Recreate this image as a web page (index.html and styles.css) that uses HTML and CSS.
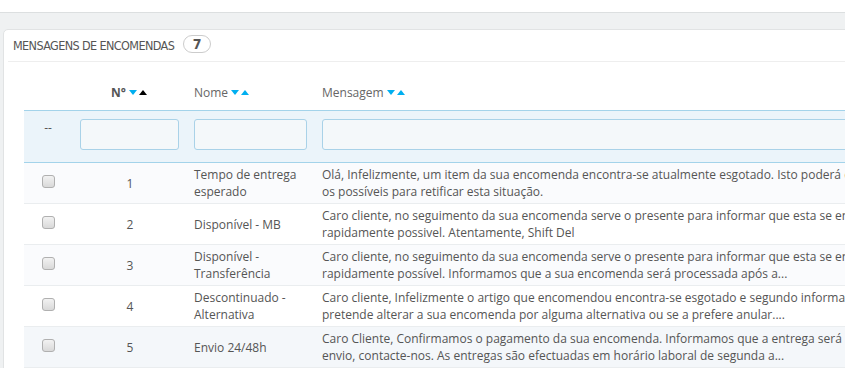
FILE: index.html
```
<!DOCTYPE html>
<html lang="pt">
<head>
    <meta charset="UTF-8">
    <meta name="viewport" content="width=device-width, initial-scale=1.0">
    <title>Mensagens de encomendas</title>
    <link rel="stylesheet" href="styles.css">
</head>
<body>

<div class="topbar"></div>

<div class="content">
    <div class="panel">
        <div class="panelHeading">
            Mensagens de encomendas
            <span class="badge">7</span>
        </div>

        <div class="tableWrap">
            <table class="listTable">
                <colgroup>
                    <col class="colCheck">
                    <col class="colId">
                    <col class="colName">
                    <col class="colMessage">
                </colgroup>
                <thead>
                    <tr class="headRow">
                        <th></th>
                        <th class="center active">N°<span class="sort"><i class="down"></i><i class="up current"></i></span></th>
                        <th>Nome<span class="sort"><i class="down"></i><i class="up"></i></span></th>
                        <th>Mensagem<span class="sort"><i class="down"></i><i class="up"></i></span></th>
                    </tr>
                    <tr class="filterRow">
                        <td class="center">--</td>
                        <td><input type="text" class="filter"></td>
                        <td><input type="text" class="filter"></td>
                        <td><input type="text" class="filter"></td>
                    </tr>
                </thead>
                <tbody>
                    <tr>
                        <td class="center"><input type="checkbox" class="rowCheck"></td>
                        <td class="center">1</td>
                        <td>Tempo de entrega<br>esperado</td>
                        <td class="message">Olá, Infelizmente, um item da sua encomenda encontra-se atualmente esgotado. Isto poderá causar um atraso na entrega. Faremos todos<br>os possíveis para retificar esta situação.</td>
                    </tr>
                    <tr>
                        <td class="center"><input type="checkbox" class="rowCheck"></td>
                        <td class="center">2</td>
                        <td>Disponível - MB</td>
                        <td class="message">Caro cliente, no seguimento da sua encomenda serve o presente para informar que esta se encontra disponível e será enviada o mais<br>rapidamente possivel. Atentamente, Shift Del</td>
                    </tr>
                    <tr>
                        <td class="center"><input type="checkbox" class="rowCheck"></td>
                        <td class="center">3</td>
                        <td>Disponível -<br>Transferência</td>
                        <td class="message">Caro cliente, no seguimento da sua encomenda serve o presente para informar que esta se encontra disponível e será enviada o mais<br>rapidamente possível. Informamos que a sua encomenda será processada após a...</td>
                    </tr>
                    <tr>
                        <td class="center"><input type="checkbox" class="rowCheck"></td>
                        <td class="center">4</td>
                        <td>Descontinuado -<br>Alternativa</td>
                        <td class="message">Caro cliente, Infelizmente o artigo que encomendou encontra-se esgotado e segundo informação do fornecedor foi descontinuado. Indique-nos se<br>pretende alterar a sua encomenda por alguma alternativa ou se a prefere anular....</td>
                    </tr>
                    <tr class="hover">
                        <td class="center"><input type="checkbox" class="rowCheck"></td>
                        <td class="center">5</td>
                        <td>Envio 24/48h</td>
                        <td class="message">Caro Cliente, Confirmamos o pagamento da sua encomenda. Informamos que a entrega será efetuada em 24/48h. Caso tenha alguma questão sobre o<br>envio, contacte-nos. As entregas são efectuadas em horário laboral de segunda a...</td>
                    </tr>
                </tbody>
            </table>
        </div>
    </div>
</div>

</body>
</html>
```

FILE: styles.css
```
body {
    margin: 0;
    padding: 0;
    font-family: "Open Sans", sans-serif;
    font-size: 12px;
    color: #555555;
    background-color: #ffffff;
    overflow: hidden;
}

.topbar {
    height: 12px;
    background-color: #ffffff;
    border-bottom: 1px solid #dcdfe0;
}

.content {
    background-color: #eff1f2;
    padding: 16px 0 40px 3px;
    min-height: 400px;
}

.panel {
    width: 1100px;
    background-color: #ffffff;
    border: 1px solid #e1e3e4;
    border-radius: 5px;
    padding-bottom: 20px;
}

.panelHeading {
    margin-left: 4px;
    padding-left: 5px;
    height: 31px;
    line-height: 31px;
    border-bottom: 1px solid #eeeeee;
    font-family: "DejaVu Sans Condensed", "DejaVu Sans", sans-serif;
    font-stretch: condensed;
    font-size: 12.5px;
    letter-spacing: -0.6px;
    text-transform: uppercase;
    color: #555555;
}

.badge {
    display: inline-block;
    margin-left: 6px;
    width: 26px;
    height: 16px;
    line-height: 16px;
    border: 1px solid #cccccc;
    border-radius: 9px;
    text-align: center;
    font-weight: bold;
    font-size: 14px;
    letter-spacing: 0;
    vertical-align: 1px;
}

.tableWrap {
    margin-left: 20px;
}

.listTable {
    border-collapse: collapse;
    table-layout: fixed;
    width: 1076px;
}

.colCheck {
    width: 49px;
}

.colId {
    width: 114px;
}

.colName {
    width: 128px;
}

.listTable th,
.listTable td {
    padding: 3px 7px;
    line-height: 17px;
    text-align: left;
    vertical-align: middle;
}

.listTable .center {
    text-align: center;
}

.headRow th {
    padding: 20px 7px 9px;
    font-weight: normal;
    color: #666666;
    white-space: nowrap;
}

.headRow th.active {
    font-weight: bold;
    color: #555555;
}

.sort {
    display: inline-block;
    margin-left: 3px;
    vertical-align: 2px;
}

.sort i {
    display: inline-block;
    width: 0;
    height: 0;
    border-left: 4px solid transparent;
    border-right: 4px solid transparent;
    margin-right: 2px;
}

.sort i.down {
    border-top: 5px solid #00aff0;
}

.sort i.up {
    border-bottom: 5px solid #00aff0;
}

.sort i.up.current {
    border-bottom-color: #000000;
}

.filterRow td {
    background-color: #ebf4fa;
    border-top: 1px solid #a3d3ea;
    border-bottom: 1px solid #a3d3ea;
    padding: 8px 8px 12px 7px;
    vertical-align: top;
}

.filter {
    display: block;
    width: 100%;
    height: 31px;
    box-sizing: border-box;
    background-color: #f4f8fa;
    border: 1px solid #a9d2e8;
    border-radius: 3px;
    margin: 0;
}

tbody td {
    border-bottom: 1px solid #eaedef;
    background-color: #ffffff;
}

tbody tr:nth-child(odd) td {
    background-color: #fafbfd;
}

tbody tr.hover td {
    background-color: #f4f7fa;
}

.message {
    white-space: nowrap;
}

.rowCheck {
    appearance: none;
    -webkit-appearance: none;
    width: 13px;
    height: 13px;
    margin: 0;
    vertical-align: 0;
    border: 1px solid #b0b0b0;
    border-radius: 3px;
    background: linear-gradient(#f2f2f2, #d9d9d9);
}
```
